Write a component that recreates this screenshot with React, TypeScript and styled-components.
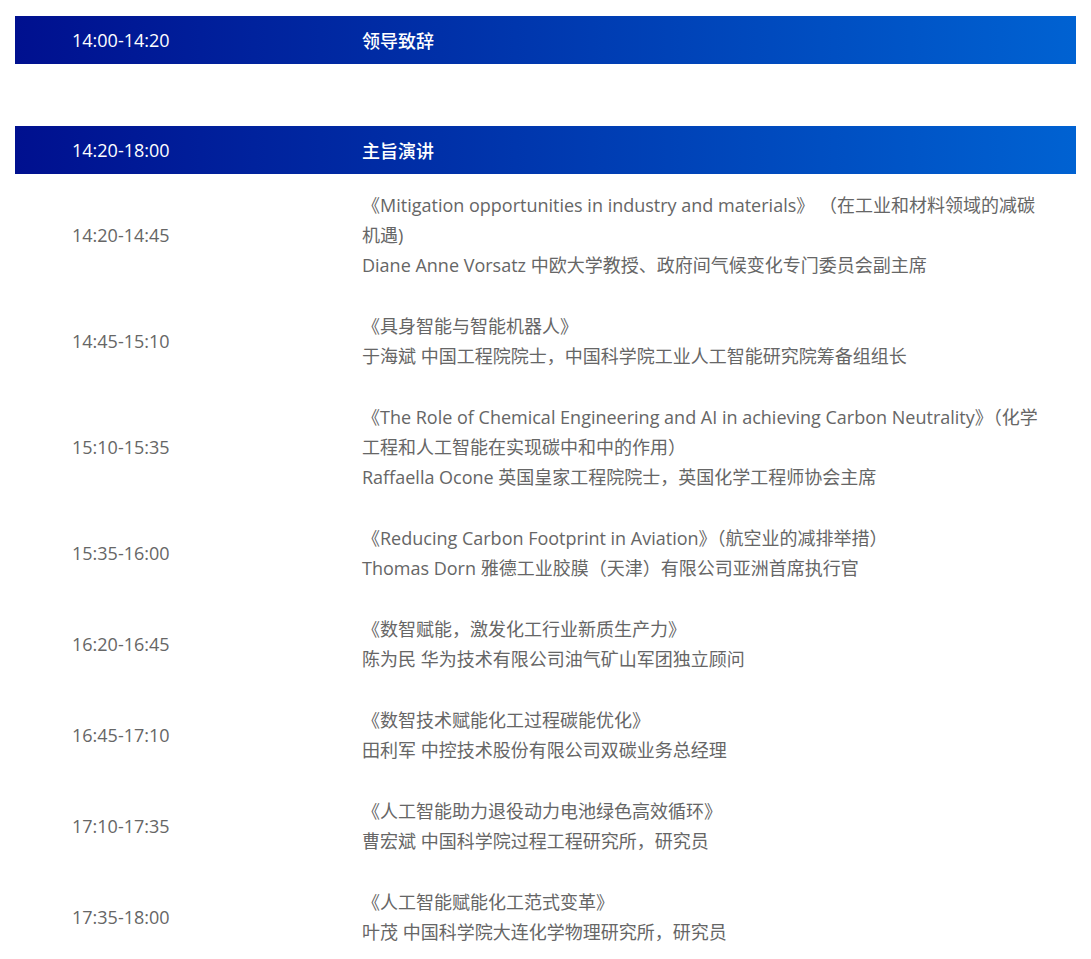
import React from "react";
import styled, { createGlobalStyle } from "styled-components";

const Global = createGlobalStyle`
  body { margin: 0; background: #fff; font-family: "Open Sans", "Noto Sans CJK SC", sans-serif; }
`;
const Page = styled.div`padding: 16px 15px 0 15px;`;
const Header = styled.div<{ $mt?: number }>`
  display: grid; grid-template-columns: 290px 1fr; height: 48px; align-items: center;
  margin-top: ${p => p.$mt ?? 0}px;
  background: linear-gradient(90deg, #00108f 0%, #0030a8 40%, #0062d2 100%);
  color: #fff; font-size: 18px; font-weight: 500; padding-left: 57px;
`;
const Row = styled.div`
  display: grid; grid-template-columns: 290px 1fr; align-items: center;
  padding: 15.5px 28px 15.5px 57px; color: #666; font-size: 18px; line-height: 30px;
`;
const Time = styled.div``;
const Body = styled.div``;

const rows: [string, string, string][] = [
  ["14:20-14:45", "《Mitigation opportunities in industry and materials》 （在工业和材料领域的减碳机遇)", "Diane Anne Vorsatz 中欧大学教授、政府间气候变化专门委员会副主席"],
  ["14:45-15:10", "《具身智能与智能机器人》", "于海斌 中国工程院院士，中国科学院工业人工智能研究院筹备组组长"],
  ["15:10-15:35", "《The Role of Chemical Engineering and AI in achieving Carbon Neutrality》（化学工程和人工智能在实现碳中和中的作用）", "Raffaella Ocone 英国皇家工程院院士，英国化学工程师协会主席"],
  ["15:35-16:00", "《Reducing Carbon Footprint in Aviation》（航空业的减排举措）", "Thomas Dorn 雅德工业胶膜（天津）有限公司亚洲首席执行官"],
  ["16:20-16:45", "《数智赋能，激发化工行业新质生产力》", "陈为民 华为技术有限公司油气矿山军团独立顾问"],
  ["16:45-17:10", "《数智技术赋能化工过程碳能优化》", "田利军 中控技术股份有限公司双碳业务总经理"],
  ["17:10-17:35", "《人工智能助力退役动力电池绿色高效循环》", "曹宏斌 中国科学院过程工程研究所，研究员"],
  ["17:35-18:00", "《人工智能赋能化工范式变革》", "叶茂 中国科学院大连化学物理研究所，研究员"],
];

export default function App() {
  return (
    <Page>
      <Global />
      <Header><span>14:00-14:20</span><span>领导致辞</span></Header>
      <Header $mt={62}><span>14:20-18:00</span><span>主旨演讲</span></Header>
      {rows.map(r => (
        <Row key={r[0]}>
          <Time>{r[0]}</Time>
          <Body><div>{r[1]}</div><div>{r[2]}</div></Body>
        </Row>
      ))}
    </Page>
  );
}
